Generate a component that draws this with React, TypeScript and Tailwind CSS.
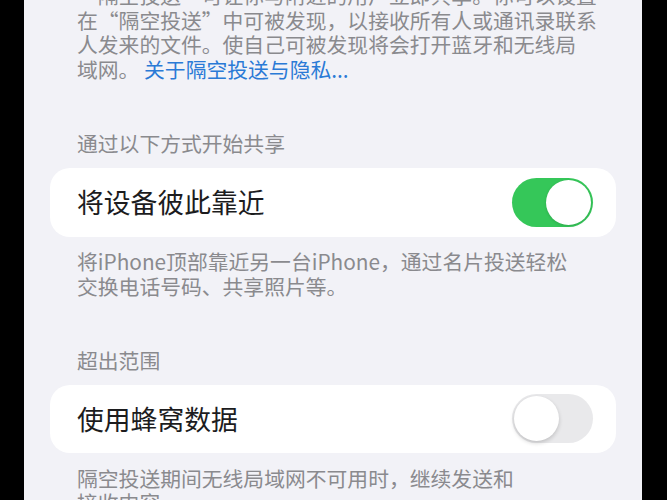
import React from "react";

const font = { fontFamily: '"Noto Sans CJK SC", "Noto Sans", sans-serif' };

function Toggle({ on }: { on: boolean }) {
  return on ? (
    <div className="w-[81px] h-[49px] rounded-full bg-[#35c759] p-[2px] flex justify-end">
      <div className="w-[45px] h-[45px] rounded-full bg-white shadow-[0_1px_3px_rgba(0,0,0,0.15)]" />
    </div>
  ) : (
    <div className="w-[81px] h-[49px] rounded-full bg-[#e9e9eb] p-[2px] flex justify-start">
      <div className="w-[45px] h-[45px] rounded-full bg-white shadow-[0_2px_4px_rgba(0,0,0,0.18)]" />
    </div>
  );
}

export default function App() {
  return (
    <div className="w-[667px] h-[500px] bg-black flex overflow-hidden" style={font}>
      <div className="ml-[24px] w-[618px] h-[500px] bg-[#f2f2f7] overflow-hidden px-[26px]">
        <div className="mt-[-17px] pl-[27px] text-[20.8px] leading-[24.5px] text-[#8a8a8e] whitespace-nowrap">
          <div>“隔空投送”可让你与附近的用户立即共享。你可以设置</div>
          <div>在“隔空投送”中可被发现，以接收所有人或通讯录联系</div>
          <div>人发来的文件。使自己可被发现将会打开蓝牙和无线局</div>
          <div>
            域网。 <span className="text-[#2a7ad6]">关于隔空投送与隐私...</span>
          </div>
        </div>

        <div className="mt-[49.5px] pl-[27px] text-[20.8px] leading-[24.5px] text-[#8a8a8e]">
          通过以下方式开始共享
        </div>

        <div className="mt-[12.75px] h-[69px] rounded-[20px] bg-white flex items-center justify-between pl-[27px] pr-[23px]">
          <span className="text-[26.8px] text-[#1c1c1e]">将设备彼此靠近</span>
          <Toggle on />
        </div>

        <div className="mt-[12.25px] pl-[27px] text-[20.8px] leading-[24.5px] text-[#8a8a8e] whitespace-nowrap">
          <div>将iPhone顶部靠近另一台iPhone，通过名片投送轻松</div>
          <div>交换电话号码、共享照片等。</div>
        </div>

        <div className="mt-[49.5px] pl-[27px] text-[20.8px] leading-[24.5px] text-[#8a8a8e]">
          超出范围
        </div>

        <div className="mt-[12.75px] h-[68px] rounded-[20px] bg-white flex items-center justify-between pl-[27px] pr-[23px]">
          <span className="text-[26.8px] text-[#1c1c1e]">使用蜂窝数据</span>
          <Toggle on={false} />
        </div>

        <div className="mt-[12.75px] pl-[27px] text-[20.8px] leading-[24.5px] text-[#8a8a8e] whitespace-nowrap">
          <div>隔空投送期间无线局域网不可用时，继续发送和</div>
          <div>接收内容。</div>
        </div>
      </div>
    </div>
  );
}
